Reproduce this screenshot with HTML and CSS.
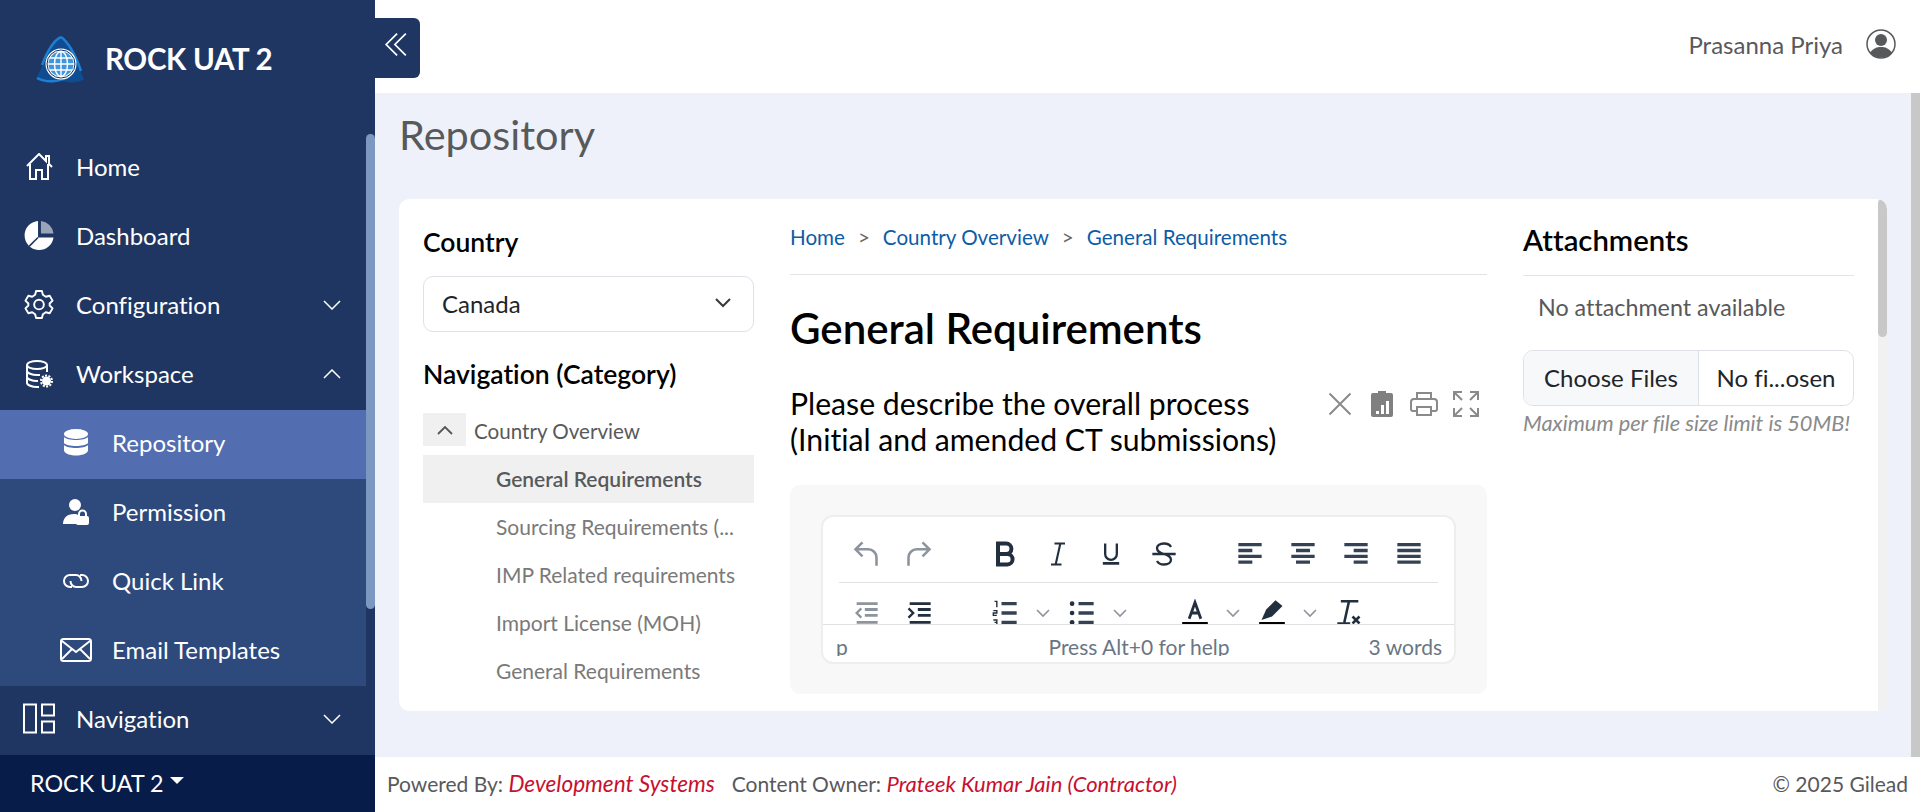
FILE: index.html
```html
<!DOCTYPE html>
<html lang="en">
<head>
<meta charset="utf-8">
<title>Repository</title>
<link rel="stylesheet" href="styles.css">
</head>
<body>
<div class="app">
  <aside class="sidebar">
    <div class="brand">
      <svg class="logo" viewBox="0 0 48 47"><path d="M25 1C18 4 9 24 1 41c-1 2 0 3 1 3 7 3 15 3 23 1 8 2 16 2 22-1 1-1 1-2 0-3C40 24 32 4 25 1z" fill="#0f4c92"/><path d="M25 1c-7 3-14 15-19 28M25 1c6 4 14 16 20 34M1 42c9 5 22 4 31-1" fill="none" stroke="#1d7fd2" stroke-width="2.500"/><circle cx="25" cy="28" r="15.500" fill="#fff"/><circle cx="25" cy="28" r="14" fill="none" stroke="#14305c" stroke-width="1"/><circle cx="25" cy="28" r="12.500" fill="#3f96dd"/><g fill="none" stroke="#fff" stroke-width="1.400"><ellipse cx="25" cy="28" rx="6.500" ry="12.500"/><path d="M25 15v26M12 28h26M14 22h22M14 34h22"/></g></svg>
      <span class="brand-name">ROCK UAT 2</span>
    </div>
    <div class="nav-wrap">
      <nav class="nav">
        <a class="item"><svg class="ico ico-s" viewBox="1 1 26 27"><path d="M2 14 14 2l7 7V4h3v8l3 3M5 12v15h6v-9h6v9h6V12" fill="none" stroke="#fff" stroke-width="2"/></svg><span>Home</span></a>
        <a class="item"><svg class="ico ico-l" viewBox="0 0 32 32"><path d="M15 1a15 15 0 1 0 16 17H15z" fill="#fff"/><path d="M18 1v13h13A15 15 0 0 0 18 1z" fill="#fff" opacity=".55"/><path d="M15 18 6 27" stroke="#1f3662" stroke-width="1.600"/></svg><span>Dashboard</span></a>
        <a class="item"><svg class="ico ico-l" viewBox="0 0 32 32"><path d="M13 2h6l1 4 3 2 4-1 3 5-3 3v2l3 3-3 5-4-1-3 2-1 4h-6l-1-4-3-2-4 1-3-5 3-3v-2l-3-3 3-5 4 1 3-2z" fill="none" stroke="#fff" stroke-width="2" stroke-linejoin="round"/><circle cx="16" cy="16" r="5" fill="none" stroke="#fff" stroke-width="2"/></svg><span>Configuration</span><svg class="chev" viewBox="0 0 18 10"><path d="m1 1 8 8 8-8"/></svg></a>
        <a class="item"><svg class="ico" viewBox="0 0 28 28"><ellipse cx="12" cy="5" rx="10" ry="4" fill="none" stroke="#fff" stroke-width="2"/><path d="M2 5v18c0 2 5 4 10 4h2M22 5v7M2 11c0 2 5 4 10 4h3M2 17c0 2 5 4 10 4h1" fill="none" stroke="#fff" stroke-width="2"/><circle cx="21.500" cy="21" r="4.500" fill="#fff"/><circle cx="21.500" cy="21" r="5.500" fill="none" stroke="#fff" stroke-width="2" stroke-dasharray="2 1.400"/></svg><span>Workspace</span><svg class="chev" viewBox="0 0 18 10"><path d="m1 9 8-8 8 8"/></svg></a>
        <div class="sub">
          <a class="item sub-item active"><svg class="ico" viewBox="0 0 24 28"><ellipse cx="12" cy="5" rx="12" ry="5" fill="#fff"/><path d="M0 8c3 4 21 4 24 0v6c-3 4-21 4-24 0zM0 16c3 4 21 4 24 0v6c-3 6-21 6-24 0z" fill="#fff"/></svg><span>Repository</span></a>
          <a class="item sub-item"><svg class="ico" viewBox="0 0 26 28"><circle cx="12" cy="7" r="6" fill="#fff"/><path d="M0 26c0-6 4-10 11-10 2 0 3 0 4 1v9z" fill="#fff"/><rect x="13" y="18" width="13" height="9" rx="2" fill="#fff"/><path d="M16 18v-2a3.500 3.500 0 0 1 7 0v2" fill="none" stroke="#fff" stroke-width="2"/></svg><span>Permission</span></a>
          <a class="item sub-item"><svg class="ico ico-link" viewBox="0 0 28 16"><path d="M10 14H8A6 6 0 0 1 8 2h6a5.500 6 0 0 1 5.500 6M18 2h2a6 6 0 0 1 0 12h-6a5.500 6 0 0 1-5.500-6" fill="none" stroke="#fff" stroke-width="2"/></svg><span>Quick Link</span></a>
          <a class="item sub-item"><svg class="ico ico-mail" viewBox="0 0 32 24"><rect x="1" y="1" width="30" height="22" rx="2.500" fill="none" stroke="#fff" stroke-width="2"/><path d="m2 3 14 11L30 3M2 21l10-10M30 21 20 11" fill="none" stroke="#fff" stroke-width="2"/></svg><span>Email Templates</span></a>
        </div>
        <a class="item"><svg class="ico ico-l" viewBox="0 0 32 30"><path d="M1 1h12v28H1zM19 1h12v11H19zM19 18h12v11H19z" fill="none" stroke="#fff" stroke-width="2"/></svg><span>Navigation</span><svg class="chev" viewBox="0 0 18 10"><path d="m1 1 8 8 8-8"/></svg></a>
      </nav>
      <div class="side-thumb"></div>
    </div>
    <div class="env"><span>ROCK UAT 2</span><i class="caret"></i></div>
  </aside>

  <div class="right">
    <header class="topbar">
      <button class="toggle"><svg viewBox="0 0 22 24"><path d="M12 2 2 12l10 10M20 2 10 12l10 10" fill="none" stroke="#fff" stroke-width="1.600"/></svg></button>
      <span class="user">Prasanna Priya</span>
      <svg class="avatar" viewBox="0 0 30 30"><circle cx="15" cy="15" r="14" fill="#fff" stroke="#58595b" stroke-width="1.500"/><circle cx="15" cy="11" r="6" fill="#58595b"/><path d="M4 24c3-5 7-6 11-6s8 1 11 6c-6 6-16 6-22 0z" fill="#58595b"/></svg>
    </header>
    <div class="page-scroll">
      <main class="main">
        <h1 class="page-title">Repository</h1>
        <section class="card">
          <div class="card-body">
            <div class="col-left">
              <h3 class="h-side">Country</h3>
              <div class="select"><span>Canada</span><svg viewBox="0 0 16 10"><path d="m1 1 7 7 7-7" fill="none" stroke="#343a40" stroke-width="2"/></svg></div>
              <h3 class="h-side nav-title">Navigation (Category)</h3>
              <div class="tree-head"><span class="tree-btn"><svg viewBox="0 0 16 10"><path d="m1 9 7-7 7 7" fill="none" stroke="#555" stroke-width="1.800"/></svg></span><span class="tree-label">Country Overview</span></div>
              <ul class="tree">
                <li class="selected">General Requirements</li>
                <li>Sourcing Requirements (...</li>
                <li>IMP Related requirements</li>
                <li>Import License (MOH)</li>
                <li>General Requirements</li>
              </ul>
            </div>
            <div class="col-mid">
              <div class="crumbs"><a>Home</a><span>&gt;</span><a>Country Overview</a><span>&gt;</span><a>General Requirements</a></div>
              <h2 class="doc-title">General Requirements</h2>
              <div class="q-row">
                <p class="question">Please describe the overall process<br>(Initial and amended CT submissions)</p>
                <div class="q-tools">
                  <svg viewBox="0 0 24 24"><path d="m3 3 18 18M21 3 3 21" fill="none" stroke="#8a8a8a" stroke-width="1.700"/></svg>
                  <svg viewBox="0 0 24 28"><path d="M3 3h5V1h8v2h5a2 2 0 0 1 2 2v20a2 2 0 0 1-2 2H3a2 2 0 0 1-2-2V5a2 2 0 0 1 2-2z" fill="#808080"/><path d="M6 21h3v3H6zM11 15h3v9h-3zM16 11h3v13h-3z" fill="#fff"/></svg>
                  <svg viewBox="0 0 28 26"><path d="M7 8V2h14v6M7 20H3a2 2 0 0 1-2-2v-7a3 3 0 0 1 3-3h20a3 3 0 0 1 3 3v7a2 2 0 0 1-2 2h-4M7 16h14v8H7z" fill="none" stroke="#8a8a8a" stroke-width="2"/></svg>
                  <svg viewBox="0 0 28 28"><path d="M2 10V2h8M2 2l8 8M18 2h8v8M26 2l-8 8M2 18v8h8M2 26l8-8M26 18v8h-8M26 26l-8-8" fill="none" stroke="#8a8a8a" stroke-width="2"/></svg>
                </div>
              </div>
              <div class="editor-wrap">
                <div class="editor">
                  <div class="tb-clip">
                    <div class="tb-row">
                      <div class="tb-group">
                        <svg viewBox="0 0 24 24"><path d="M9 2 3 8l6 6M3 8h11a7 7 0 0 1 7 7v7" fill="none" stroke="#8d949d" stroke-width="2.200"/></svg>
                        <svg viewBox="0 0 24 24"><path d="m15 2 6 6-6 6M21 8H10a7 7 0 0 0-7 7v7" fill="none" stroke="#8d949d" stroke-width="2.200"/></svg>
                      </div>
                      <div class="tb-group">
                        <svg viewBox="0 0 24 24"><path d="M6 3h7a4.500 4.500 0 0 1 0 9H6zM6 12h8a4.500 4.500 0 0 1 0 9H6z" fill="none" stroke="#222f3e" stroke-width="3.400"/></svg>
                        <svg viewBox="0 0 24 24"><path d="M9 3h9M6 21h9M14 3l-4 18" fill="none" stroke="#222f3e" stroke-width="1.800"/></svg>
                        <svg viewBox="0 0 24 24"><path d="M7 3v9a5 5 0 0 0 10 0V3" fill="none" stroke="#222f3e" stroke-width="2"/><path d="M5 20h14" stroke="#222f3e" stroke-width="2.500"/></svg>
                        <svg viewBox="0 0 24 24"><path d="M18 6c-1-2-3-3-6-3-4 0-6 2-6 4 0 6 12 4 12 10 0 2-2 4-6 4-3 0-5-1-6-3M2 12h20" fill="none" stroke="#222f3e" stroke-width="2"/></svg>
                      </div>
                      <div class="tb-group">
                        <svg viewBox="0 0 24 24"><path d="M2 4h20M2 9h12M2 14h20M2 19h12" class="ln"/></svg>
                        <svg viewBox="0 0 24 24"><path d="M2 4h20M6 9h12M2 14h20M6 19h12" class="ln"/></svg>
                        <svg viewBox="0 0 24 24"><path d="M2 4h20M10 9h12M2 14h20M10 19h12" class="ln"/></svg>
                        <svg viewBox="0 0 24 24"><path d="M2 4h20M2 9h20M2 14h20M2 19h20" class="ln"/></svg>
                      </div>
                    </div>
                    <div class="tb-row row2">
                      <div class="tb-group">
                        <svg viewBox="0 0 24 24"><path d="M4 4h18M11 9h11M11 14h11M4 20h18" stroke="#8d949d" stroke-width="2.400"/><path d="M8 8l-4 4 4 4" fill="none" stroke="#8d949d" stroke-width="2"/></svg>
                        <svg viewBox="0 0 24 24"><path d="M4 4h18M11 9h11M11 14h11M4 20h18" stroke="#222f3e" stroke-width="2.400"/><path d="m3 8 4 4-4 4" fill="none" stroke="#222f3e" stroke-width="2"/></svg>
                      </div>
                      <div class="tb-group tight">
                        <svg viewBox="0 0 24 24"><path d="M9 4h13M9 12h13M9 20h13" class="ln"/><path d="M3 2h2v5M2 10h3v2H2v2h3M2 18h3v4H2M3 20h2" fill="none" stroke="#222f3e" stroke-width="1.200"/></svg><svg class="mini" viewBox="0 0 14 8"><path d="m1 1 6 6 6-6"/></svg>
                        <svg viewBox="0 0 24 24"><path d="M9 4h13M9 12h13M9 20h13" class="ln"/><circle cx="3.500" cy="4" r="2" fill="#222f3e"/><circle cx="3.500" cy="12" r="2" fill="#222f3e"/><circle cx="3.500" cy="20" r="2" fill="#222f3e"/></svg><svg class="mini" viewBox="0 0 14 8"><path d="m1 1 6 6 6-6"/></svg>
                      </div>
                      <div class="tb-group tight colors">
                        <svg viewBox="0 0 24 24"><path d="m7 17 5-14 5 14M9 12h6" fill="none" stroke="#222f3e" stroke-width="2.400"/><path d="M1 21h22" stroke="#000" stroke-width="2.400"/></svg><svg class="mini" viewBox="0 0 14 8"><path d="m1 1 6 6 6-6"/></svg>
                        <svg viewBox="0 0 24 24"><path d="M3 18 7 9l8-8 6 5-9 9z" fill="#222f3e"/><path d="M1 21h22" stroke="#000" stroke-width="2.400"/></svg><svg class="mini" viewBox="0 0 14 8"><path d="m1 1 6 6 6-6"/></svg>
                        <svg viewBox="0 0 24 24"><path d="M5 2h15M12 2 8 20M2 21h11M15 15l6 6M21 15l-6 6" fill="none" stroke="#222f3e" stroke-width="2.200"/></svg>
                      </div>
                    </div>
                  </div>
                  <div class="status"><span>p</span><span class="status-help">Press Alt+0 for help</span><span class="status-count">3 words</span></div>
                </div>
              </div>
            </div>
            <div class="col-right">
              <h3 class="att-title">Attachments</h3>
              <p class="att-none">No attachment available</p>
              <div class="file"><span class="file-btn">Choose Files</span><span class="file-name">No fi...osen</span></div>
              <p class="att-hint">Maximum per file size limit is 50MB!</p>
            </div>
          </div>
          <div class="card-track"><div class="card-thumb"></div></div>
        </section>
      </main>
      <div class="page-track"></div>
    </div>
    <footer class="footer">
      <div>Powered By: <em class="em-dev">Development Systems</em><span class="owner">Content Owner: <em>Prateek Kumar Jain (Contractor)</em></span></div>
      <div>© 2025 Gilead</div>
    </footer>
  </div>
</div>
</body>
</html>
```
FILE: styles.css
```css
* { box-sizing: border-box; }
html, body { margin: 0; height: 100%; overflow: hidden; }
body { font-family: Lato, "Open Sans", "Liberation Sans", sans-serif; font-variant-ligatures: none; color: #58595b; background: #fff; }
h1, h2, h3, p, ul { margin: 0; padding: 0; }
ul { list-style: none; }

.app { display: flex; width: 1920px; height: 812px; }
.sidebar { width: 375px; flex: none; background: #1f3662; display: flex; flex-direction: column; color: #fff; }
.brand { height: 134px; display: flex; align-items: flex-start; padding: 35px 0 0 36px; gap: 21px; }
.logo { width: 48px; height: 47px; flex: none; margin-top: 1px; }
.brand-name { font-size: 29.500px; font-weight: 700; line-height: 48px; letter-spacing: -.3px; }
.nav-wrap { flex: 1; display: flex; min-height: 0; }
.nav { width: 366px; }
.side-thumb { width: 9px; height: 475px; background: #7d98c0; border-radius: 5px; }
.item { height: 69px; display: flex; align-items: center; padding: 0 25px 4px 23px; font-size: 24px; color: #fff; }
.item > span { flex: 1; margin-left: 21px; }
.ico { width: 32px; height: 28px; flex: none; }
.ico-s { height: 27px; }
.ico-l { height: 31px; }
.ico-link { height: 16px; }
.ico-mail { height: 24px; }
.chev { width: 18px; height: 10px; fill: none; stroke: #fff; stroke-width: 1.500; }
.sub { background: #2e4a7c; }
.sub-item { padding-left: 60px; }
.sub-item > span { margin-left: 20px; }
.active { background: #526db0; }
.env { height: 57px; background: #071c49; display: flex; align-items: center; padding: 0 0 2px 30px; font-size: 23.300px; }
.caret { width: 0; height: 0; margin-left: 7px; margin-top: -5px; border-left: 7px solid transparent; border-right: 7px solid transparent; border-top: 7px solid #fff; }

.right { flex: 1; min-width: 0; display: flex; flex-direction: column; }
.topbar { height: 93px; flex: none; position: relative; display: flex; align-items: center; justify-content: flex-end; padding: 0 24px 0 0; background: #fff; }
.toggle { position: absolute; left: 0; top: 18px; width: 45px; height: 60px; padding: 0 0 8px 0; border: 0; background: #1f3662; border-radius: 0 6px 6px 0; display: flex; align-items: center; }
.toggle svg { width: 24px; height: 27px; margin-left: 9px; }
.user { font-size: 24px; color: #58595b; margin-right: 23px; margin-top: -5px; }
.avatar { width: 30px; height: 30px; margin-top: -5px; }

.page-scroll { flex: 1; min-height: 0; display: flex; background: #eef1f9; }
.main { flex: 1; min-width: 0; padding: 17px 24px 0 24px; }
.page-track { width: 9px; background: #c8c8c8; }
.page-title { font-size: 41.500px; font-weight: 400; line-height: 48px; color: #58595b; margin-bottom: 41px; }
.card { height: 512px; background: #fff; border-radius: 10px; display: flex; overflow: hidden; }
.card-body { flex: 1; min-width: 0; display: flex; padding: 24px 23px 0 24px; }
.card-track { width: 9px; background: #f1f1f1; flex: none; }
.card-thumb { height: 138px; background: #c8c8c8; border-radius: 5px; }

.col-left { width: 331px; flex: none; }
.h-side { font-size: 26.500px; font-weight: 600; line-height: 36px; color: #000; padding-top: 1px; }
.select { margin-top: 16px; height: 56px; border: 1px solid #dfe1ea; border-radius: 10px; display: flex; align-items: center; justify-content: space-between; padding: 0 22px 2px 18px; font-size: 24px; color: #212529; }
.select svg { width: 16px; height: 10px; }
.nav-title { margin-top: 23px; }
.tree-head { margin-top: 21px; height: 33px; display: flex; align-items: center; font-size: 20.600px; color: #58595b; gap: 8px; }
.tree-btn { width: 43px; height: 33px; background: #f0f0f0; display: flex; align-items: center; justify-content: center; }
.tree-btn svg { width: 16px; height: 10px; }
.tree-label { padding-top: 2px; }
.tree { margin-top: 9px; }
.tree li { height: 48px; line-height: 47px; padding-left: 73px; font-size: 21px; color: #7a7a7a; white-space: nowrap; }
.tree li.selected { background: #f0f0f0; color: #58595b; font-weight: 600; }

.col-mid { width: 697px; flex: none; margin-left: 36px; }
.crumbs { height: 52px; display: flex; align-items: flex-start; font-size: 20.600px; line-height: 28px; color: #0d5ca6; border-bottom: 1px solid #e4e4e4; }
.crumbs span { margin: 0 13px; color: #666; }
.doc-title { font-size: 42px; font-weight: 600; line-height: 48px; color: #000; margin-top: 29px; }
.q-row { display: flex; justify-content: space-between; margin-top: 33px; padding-right: 7px; }
.question { font-size: 30.200px; line-height: 36px; color: #000; white-space: nowrap; }
.q-tools { display: flex; gap: 14px; margin-top: 5px; height: 28px; }
.q-tools svg { width: 28px; height: 28px; }
.editor-wrap { margin-top: 28px; height: 209px; background: #f8f8f8; border-radius: 10px; padding: 30px 31px 0 31px; }
.editor { height: 149px; background: #fff; border: 2px solid #eeeeee; border-radius: 12px; overflow: hidden; }
.tb-clip { height: 108px; overflow: hidden; border-bottom: 1px solid #e2e2e2; padding: 0 16px; }
.tb-row { height: 66px; display: flex; align-items: center; border-bottom: 1px solid #e2e2e2; padding: 8px 14px 0 13px; }
.tb-row.row2 { height: 60px; border-bottom: 0; align-items: flex-start; padding-top: 16px; }
.tb-group { display: flex; gap: 25px; }
.tb-group + .tb-group { margin-left: 58px; }
.tb-group + .tb-group.colors { margin-left: 54px; }
.tb-group svg { width: 28px; height: 28px; flex: none; }
.tb-group.tight { gap: 18px; }
.tb-group .mini { width: 14px; height: 28px; margin-left: -1px; fill: none; stroke: #8d949d; stroke-width: 1.600; }
.tb-group .ln { stroke: #354254; stroke-width: 2.800; fill: none; }
.status { height: 31px; display: grid; grid-template-columns: 1fr auto 1fr; padding: 8px 12px 0 13px; font-size: 21px; line-height: 28px; color: #6a7683; overflow: hidden; }
.status-count { text-align: right; }

.col-right { width: 331px; margin-left: 36px; flex: none; }
.att-title { font-size: 29.300px; font-weight: 600; line-height: 36px; color: #000; margin-top: -1px; padding-bottom: 17px; border-bottom: 1px solid #e4e4e4; }
.att-none { font-size: 23.300px; line-height: 30px; padding: 16px 0 0 15px; color: #58595b; }
.file { margin-top: 28px; height: 56px; display: flex; border: 1px solid #dfe1ea; border-radius: 10px; overflow: hidden; font-size: 24px; color: #212529; }
.file-btn { width: 175px; background: #f7f8fa; border-right: 1px solid #dfe1ea; display: flex; align-items: center; justify-content: center; padding-bottom: 2px; }
.file-name { flex: 1; display: flex; align-items: center; justify-content: center; padding-bottom: 2px; }
.att-hint { margin-top: 3px; font-size: 21.800px; line-height: 28px; font-style: italic; color: #8a8a8a; white-space: nowrap; }

.footer { height: 55px; flex: none; background: #fff; display: flex; align-items: center; justify-content: space-between; padding: 0 12px 2px; font-size: 21px; color: #58595b; }
.footer em { color: #c8102e; font-style: italic; font-size: 22px; }
.footer .em-dev { font-size: 22.600px; }
.owner { margin-left: 17px; }
```
